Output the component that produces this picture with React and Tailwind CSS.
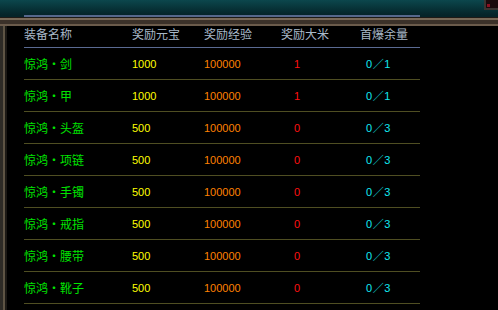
import React from "react";

const rows = [
  { name: "惊鸿", part: "剑", gold: "1000", exp: "100000", rice: "1", left: "1" },
  { name: "惊鸿", part: "甲", gold: "1000", exp: "100000", rice: "1", left: "1" },
  { name: "惊鸿", part: "头盔", gold: "500", exp: "100000", rice: "0", left: "3" },
  { name: "惊鸿", part: "项链", gold: "500", exp: "100000", rice: "0", left: "3" },
  { name: "惊鸿", part: "手镯", gold: "500", exp: "100000", rice: "0", left: "3" },
  { name: "惊鸿", part: "戒指", gold: "500", exp: "100000", rice: "0", left: "3" },
  { name: "惊鸿", part: "腰带", gold: "500", exp: "100000", rice: "0", left: "3" },
  { name: "惊鸿", part: "靴子", gold: "500", exp: "100000", rice: "0", left: "3" },
];

const cjk = "font-['SimSun','Noto_Sans_CJK_SC',sans-serif]";
const num = "font-['Liberation_Sans','Noto_Sans_CJK_SC',sans-serif] text-[11px] leading-[12px]";

export default function App() {
  return (
    <div className="w-[498px] h-[310px] bg-black overflow-hidden flex flex-col">
      {/* top frame */}
      <div className="h-[15px] bg-gradient-to-b from-[#0c474d] via-[#08353a] to-[#052429] flex justify-end shrink-0">
        <div className="w-[14px] h-[10px] bg-[#1a0a0c] border-l-2 border-b-2 border-[#3a3532] flex items-end">
          <div className="w-[3px] h-[3px] bg-[#8a1020] mb-[1px] ml-[1px]" />
        </div>
      </div>
      <div className="h-[2px] bg-[#052429] flex shrink-0">
        <div className="w-[24px]" />
        <div className="w-[396px] bg-[#56688c]" />
      </div>
      <div className="h-[1px] bg-[#1e1a16] shrink-0" />
      <div className="h-[2px] bg-[#7a6a58] shrink-0" />
      <div className="h-[4px] bg-[#3b3129] shrink-0" />
      <div className="h-[2px] bg-[#6b5b4b] shrink-0" />

      <div className="flex flex-1">
        {/* left frame */}
        <div className="w-[3px] bg-[#2e2b26]" />
        <div className="w-[2px] bg-[#5e5444]" />
        <div className="w-[2px] bg-[#1c1915]" />
        <div className="w-[17px]" />

        <div className="w-[396px] flex flex-col">
          <div
            className={`h-[22px] shrink-0 grid grid-cols-[108px_72px_77px_79px_1fr] pt-[1px] text-[12px] leading-[14px] text-[#a9b9c9] border-b border-b-[#5a6a92] ${cjk}`}
          >
            <div>装备名称</div>
            <div>奖励元宝</div>
            <div>奖励经验</div>
            <div>奖励大米</div>
            <div>首爆余量</div>
          </div>
          {rows.map((r) => (
            <div
              key={r.part}
              className="h-[32px] shrink-0 grid grid-cols-[108px_72px_90px_72px_1fr] items-center border-b border-b-[#4f4e22]"
            >
              <div className={`flex text-[12px] leading-[14px] text-[#00e400] ${cjk}`}>
                {r.name}
                <span className="w-[12px] text-center">·</span>
                {r.part}
              </div>
              <div className={`text-[#ffff00] ${num}`}>{r.gold}</div>
              <div className={`text-[#ff8000] ${num}`}>{r.exp}</div>
              <div className={`text-[#ff1010] ${num}`}>{r.rice}</div>
              <div className={`flex items-center text-[#10e8f0] ${num}`}>
                0<span className="w-[12px] text-center">／</span>{r.left}
              </div>
            </div>
          ))}
        </div>
      </div>
    </div>
  );
}
